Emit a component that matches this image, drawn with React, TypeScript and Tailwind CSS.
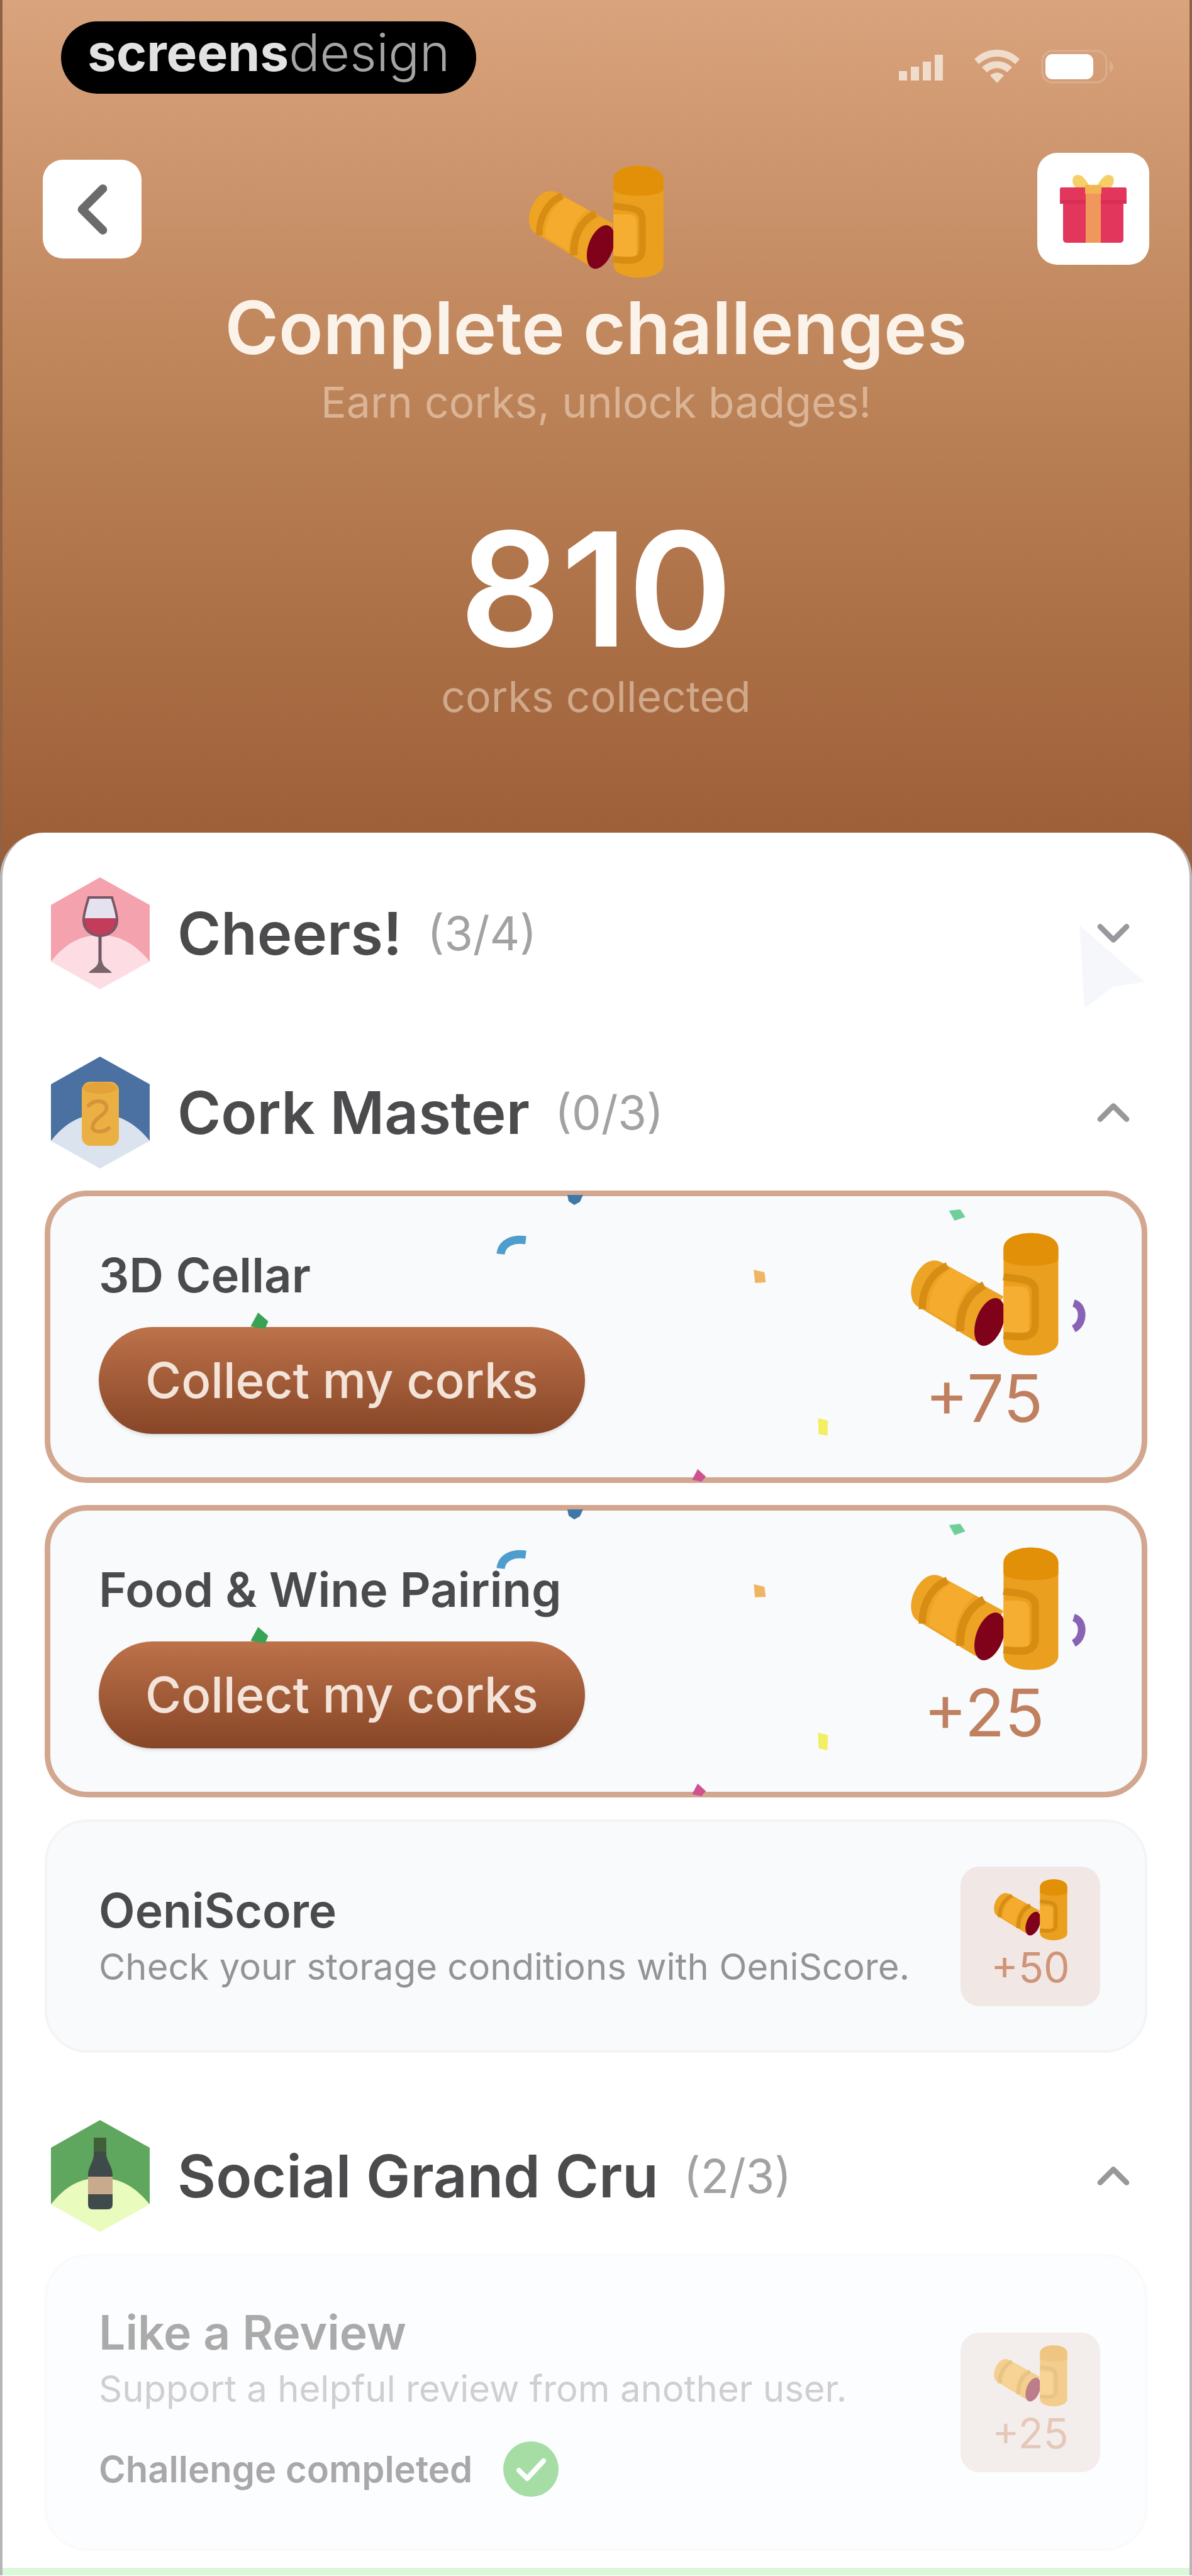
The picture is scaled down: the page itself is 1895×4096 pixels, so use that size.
import type { ReactNode } from "react";
import { ChevronDown, ChevronLeft, ChevronUp } from "lucide-react";

function Corks({ className }: { className: string }) {
  return (
    <svg viewBox="175 88 740 606" className={className} aria-hidden="true">
      <path d="M300 224 C235 225 175 330 190 400 C194 425 205 440 225 452 L505 622 L640 400 L350 240 C333 229 318 224 300 224Z" fill="#eda323" />
      <path d="M385 262 L500 325 C440 370 405 450 400 545 L275 470 C275 380 320 300 385 262Z" fill="#f4ab2e" />
      <path d="M365 250 C285 285 240 370 243 462" fill="none" stroke="#d78d13" strokeWidth="36" />
      <path d="M545 345 C465 385 425 465 428 570" fill="none" stroke="#d78d13" strokeWidth="40" />
      <ellipse cx="572" cy="525" rx="66" ry="122" transform="rotate(20 572 525)" fill="#80021a" />
      <path d="M640 165 C640 65 908 65 908 165 V620 C908 712 640 712 640 620Z" fill="#eb9f1e" />
      <path d="M640 165 C640 65 908 65 908 165 V215 C908 262 640 262 640 215Z" fill="#e29007" />
      <path d="M640 350 H715 C750 350 765 365 765 400 V575 H640Z" fill="#f5ae32" />
      <path d="M640 303 C700 318 795 305 795 375 V535 C795 600 740 605 640 590" fill="none" stroke="#d68d12" strokeWidth="36" />
    </svg>
  );
}

function Gift() {
  return (
    <svg viewBox="0 0 110 116" className="h-[116px] w-[110px]" aria-hidden="true">
      <path d="M55 26 C45 20 42 4 30 4 C18 5 20 24 34 28Z M55 26 C65 20 68 4 80 4 C92 5 90 24 76 28Z" fill="#f6cf68" />
      <path d="M4 24 H106 Q108 24 108 28 V48 H103 V106 Q103 112 97 112 H13 Q7 112 7 106 V48 H2 V28 Q2 24 4 24Z" fill="#e2365c" />
      <path d="M2 44 H108 V50 H2Z" fill="#d92f54" />
      <path d="M43 24 H67 V112 H43Z" fill="#f0985c" />
      <path d="M42 20 H68 V34 H42Z" fill="#f3b552" />
    </svg>
  );
}

function HexBadge({ top, bottom, children }: { top: string; bottom: string; children: ReactNode }) {
  return (
    <svg viewBox="0 0 157 178" className="h-[178px] w-[157px] shrink-0" aria-hidden="true">
      <path d="M78 0 L157 44 V134 H0 V44Z" fill={top} />
      <path d="M0 134 C22 106 46 92 78 92 C110 92 134 106 157 134 L78 178Z" fill={bottom} />
      {children}
    </svg>
  );
}

function WineBadge() {
  return (
    <HexBadge top="#f4a3ae" bottom="#fddde3">
      <path d="M60 32 H97 C101 46 106 60 105 70 C104 84 92 93 78 93 C65 93 53 84 52 70 C51 60 56 46 60 32Z" fill="#e4e2ef" />
      <path d="M53 65 H104 C106 82 94 93 78 93 C63 93 51 82 53 65Z" fill="#c33c5a" />
      <path d="M60 32 H97 C101 46 106 60 105 70 C104 84 92 93 78 93 C65 93 53 84 52 70 C51 60 56 46 60 32Z" fill="none" stroke="#7c5666" strokeWidth="4" />
      <path d="M78 93 V143" stroke="#6f5963" strokeWidth="5" />
      <path d="M60 152 C64 145 74 145 76 132 H81 C83 145 93 145 97 152Z" fill="#77656b" />
    </HexBadge>
  );
}

function CorkBadge() {
  return (
    <HexBadge top="#4a71a2" bottom="#dbe3ee">
      <rect x="49" y="40" width="59" height="102" rx="14" fill="#ebb043" />
      <ellipse cx="78" cy="50" rx="27" ry="9" fill="#e3a23a" />
      <path d="M60 78 C70 66 92 70 88 84 C86 94 66 98 66 114 C70 122 84 120 92 114" fill="none" stroke="#d6943a" strokeWidth="6" strokeLinecap="round" />
    </HexBadge>
  );
}

function BottleBadge() {
  return (
    <HexBadge top="#5fa75f" bottom="#e9fbbd">
      <path d="M68 28 H88 V56 C90 68 98 74 98 88 V134 Q98 142 90 142 H66 Q59 142 59 134 V88 C59 74 67 68 68 56Z" fill="#3f4a4b" />
      <path d="M68 28 H88 V50 H68Z" fill="#41603a" />
      <path d="M59 90 H98 V118 H59Z" fill="#c7ab8c" />
    </HexBadge>
  );
}

function Confetti() {
  return (
    <svg viewBox="0 0 1751 465" preserveAspectRatio="none" className="pointer-events-none absolute -inset-[9px] h-[calc(100%+18px)] w-[calc(100%+18px)]" aria-hidden="true">
      <path d="M830 7 H855 L850 18 L841 23 L832 17Z" fill="#3f78a6" />
      <path d="M724 101 C726 84 742 76 764 79" fill="none" stroke="#4f9dcc" strokeWidth="13" />
      <path d="M1126 126 L1143 130 L1145 146 L1128 147Z" fill="#f0b563" />
      <path d="M339 194 L355 208 L350 220 L327 216Z" fill="#36a355" />
      <path d="M1436 32 L1454 30 L1462 42 L1445 48Z" fill="#6fcf9b" />
      <path d="M1634 179 C1651 184 1651 211 1634 220" fill="none" stroke="#8a62b5" strokeWidth="12" />
      <path d="M1228 362 L1244 366 L1243 390 L1229 387Z" fill="#f2ef62" />
      <path d="M1037 443 L1050 455 L1043 463 L1028 460Z" fill="#cf5290" />
    </svg>
  );
}

function SectionHeader({ badge, title, count, open }: { badge: ReactNode; title: string; count: string; open: boolean }) {
  return (
    <h2>
      <button type="button" aria-expanded={open} className="flex w-full items-center pr-3 pl-[10px] text-left">
        {badge}
        <span className="ml-11 text-[94px] leading-[120px] font-semibold text-[#4b4b4d]">{title}</span>
        <span className="ml-10 text-[74px] leading-[120px] text-[#a2a2a4]">{count}</span>
        {open ? (
          <ChevronUp className="ml-auto size-[84px] text-[#98989b]" strokeWidth={2.5} />
        ) : (
          <ChevronDown className="ml-auto size-[84px] text-[#98989f]" strokeWidth={2.5} />
        )}
      </button>
    </h2>
  );
}

function CollectCard({ title, points }: { title: string; points: string }) {
  return (
    <article className="relative flex min-h-[465px] items-center justify-between rounded-[68px] border-[9px] border-[#d3a78f] bg-[#f8fafc] pr-[130px] pl-[77px]">
      <div className="pt-[10px]">
        <h3 className="text-[76px] leading-[90px] font-semibold text-[#4b4b4e]">{title}</h3>
        <button type="button" className="mt-[38px] h-[170px] rounded-full bg-linear-to-b from-[#bd724a] to-[#874627] px-[74px] text-[78px] font-medium text-[#f3e3d8] shadow-md">
          Collect my corks
        </button>
      </div>
      <div className="flex w-[241px] flex-col items-center pb-[18px]">
        <Corks className="h-[197px] w-[241px]" />
        <p className="mt-4 text-[104px] leading-[100px] text-[#c0805f]">{points}</p>
      </div>
      <Confetti />
    </article>
  );
}

function ChallengeCard({ title, text, points, done = false }: { title: string; text: string; points: string; done?: boolean }) {
  return (
    <article className={done ? "min-h-[472px] rounded-[68px] border-4 border-[#fafafb] bg-[#fcfdfe] flex items-center justify-between pr-[71px] pl-[82px]" : "min-h-[371px] rounded-[68px] border-4 border-[#f3f4f6] bg-[#f8fafc] flex items-center justify-between pr-[71px] pl-[82px]"}>
      <div>
        <h3 className={done ? "text-[75px] leading-[80px] font-semibold text-[#aaaaab]" : "text-[75px] leading-[80px] font-semibold text-[#4b4b4e]"}>{title}</h3>
        <p className={done ? "mt-4 text-[58px] leading-[66px] text-[#cfcfd1]" : "mt-4 text-[58px] leading-[66px] text-[#949497]"}>{text}</p>
        {done && (
          <p className="mt-[50px] flex items-center text-[58px] leading-[90px] font-semibold text-[#a8a8aa]">
            Challenge completed
            <svg viewBox="0 0 90 90" className="ml-12 size-[90px]" aria-hidden="true">
              <circle cx="45" cy="45" r="44" fill="#a5dda4" />
              <path d="M26 47 L39 60 L65 32" fill="none" stroke="#fff" strokeWidth="8" strokeLinecap="round" strokeLinejoin="round" />
            </svg>
          </p>
        )}
      </div>
      <div className={done ? "flex size-[222px] shrink-0 flex-col items-center justify-center rounded-[30px] bg-[#ece0dc] pb-1 opacity-50" : "flex size-[222px] shrink-0 flex-col items-center justify-center rounded-[30px] bg-[#f1e8e5] pb-1"}>
        <Corks className="h-[98px] w-[120px]" />
        <p className="mt-1 text-[66px] leading-[76px] text-[#d09478]">{points}</p>
      </div>
    </article>
  );
}

export default function App() {
  return (
    <div className="w-full bg-white font-['Inter',sans-serif]">
      <header className="flex flex-col border-x-4 border-[#8f6243] bg-linear-to-b from-[#d9a37d] via-[#b97f54] to-[#9a5c35] px-16 pt-[34px] pb-[251px] text-center">
        <div className="flex items-center justify-between pr-[52px] pl-[29px]">
          <div className="flex h-[115px] items-start rounded-full bg-black px-[42px] pt-1 text-[82px] leading-[92px]">
            <span className="font-bold text-[#e2e2e2]">screens</span>
            <span className="font-light text-[#a5a5a5]">design</span>
          </div>
          <div className="flex items-center pt-7">
            <svg viewBox="0 0 84 50" className="h-[50px] w-[84px]" aria-label="Signal" role="img">
              <path d="M2 32 H15 V47 H2Z M21 25 H34 V47 H21Z M40 17 H53 V47 H40Z M59 6 H72 V47 H59Z" fill="#f0dccb" />
            </svg>
            <svg viewBox="0 0 76 58" className="ml-9 h-[58px] w-[76px]" aria-label="Wi-Fi" role="img">
              <path d="M2 17 C22 -3 54 -3 74 17 L67 25 C50 9 26 9 9 25Z M14 30 C28 17 48 17 62 30 L54 38 C44 29 32 29 22 38Z M27 43 C34 37 42 37 49 43 L38 55Z" fill="#f0dccb" />
            </svg>
            <svg viewBox="0 0 120 54" className="ml-8 h-[54px] w-[120px]" aria-label="Battery" role="img">
              <rect x="2" y="2" width="102" height="50" rx="16" fill="none" stroke="#dcae8c" strokeWidth="3" />
              <rect x="7" y="7" width="76" height="40" rx="11" fill="#fff" />
              <path d="M109 18 C117 21 117 33 109 36Z" fill="#dcae8c" />
            </svg>
          </div>
        </div>
        <div className="mt-[94px] grid grid-cols-3 items-start">
          <button type="button" aria-label="Back" className="mt-[11px] flex size-[157px] items-center justify-center rounded-[32px] bg-white text-[#6b6b6b]">
            <ChevronLeft className="size-[132px]" strokeWidth={2.5} />
          </button>
          <Corks className="mt-5 h-[180px] w-[220px] justify-self-center" />
          <button type="button" aria-label="Rewards" className="flex size-[178px] items-center justify-center justify-self-end rounded-[32px] bg-white">
            <Gift />
          </button>
        </div>
        <h1 className="mt-2 text-[116px] leading-[140px] font-semibold text-[#fbf3ea]">Complete challenges</h1>
        <p className="mt-3 text-[68px] leading-[72px] text-[#dbb496]">Earn corks, unlock badges!</p>
        <p className="mt-[132px] text-[252px] leading-[260px] font-semibold text-white">810</p>
        <p className="mt-1 text-[68px] leading-[72px] text-[#d0a88a]">corks collected</p>
      </header>
      <main className="relative -mt-[70px] rounded-t-[70px] border-x-4 border-[#b9b6b9] bg-white px-[67px] pt-[71px]">
        <section className="relative">
          <svg viewBox="0 0 112 138" className="absolute top-[74px] right-0 h-[138px] w-[112px]" aria-hidden="true">
            <path d="M4 2 L108 92 L58 100 L12 134Z" fill="#f5f7fa" />
          </svg>
          <div className="relative">
            <SectionHeader badge={<WineBadge />} title="Cheers!" count="(3/4)" open={false} />
          </div>
        </section>
        <section className="mt-[107px] flex flex-col gap-[35px]">
          <SectionHeader badge={<CorkBadge />} title="Cork Master" count="(0/3)" open />
          <CollectCard title="3D Cellar" points="+75" />
          <CollectCard title="Food & Wine Pairing" points="+25" />
          <ChallengeCard title="OeniScore" text="Check your storage conditions with OeniScore." points="+50" />
        </section>
        <section className="mt-[107px] flex flex-col gap-[35px]">
          <SectionHeader badge={<BottleBadge />} title="Social Grand Cru" count="(2/3)" open />
          <ChallengeCard title="Like a Review" text="Support a helpful review from another user." points="+25" done />
        </section>
        <div className="-mx-[67px] mt-[27px] h-3 bg-[#dcf8da]" />
      </main>
    </div>
  );
}
